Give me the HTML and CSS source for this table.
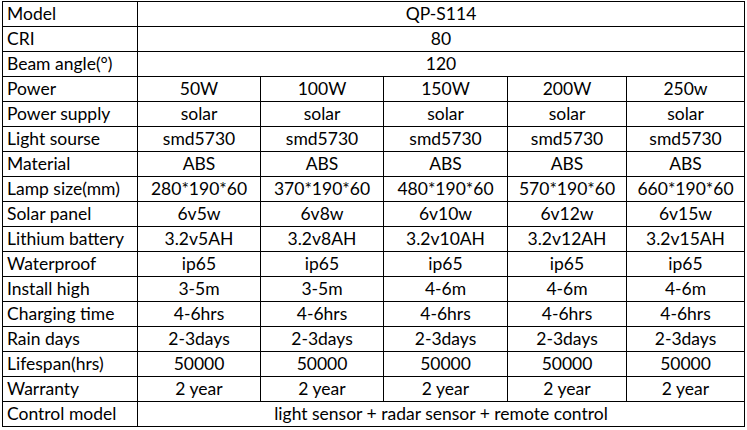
FILE: index.html
```html
<!DOCTYPE html>
<html lang="en">
<head>
  <meta charset="UTF-8" />
  <title>QP-S114 spec</title>
  <link rel="stylesheet" href="styles.css">
</head>
<body>
  <table class="spec">
    <colgroup>
      <col class="c-label">
      <col class="c1"><col class="c2"><col class="c3"><col class="c4"><col class="c5">
    </colgroup>
    <tr><td>Model</td><td colspan="5">QP-S114</td></tr>
    <tr><td>CRI</td><td colspan="5">80</td></tr>
    <tr><td>Beam angle(°)</td><td colspan="5">120</td></tr>
    <tr><td>Power</td><td>50W</td><td>100W</td><td>150W</td><td>200W</td><td>250w</td></tr>
    <tr><td>Power supply</td><td>solar</td><td>solar</td><td>solar</td><td>solar</td><td>solar</td></tr>
    <tr><td>Light sourse</td><td>smd5730</td><td>smd5730</td><td>smd5730</td><td>smd5730</td><td>smd5730</td></tr>
    <tr><td>Material</td><td>ABS</td><td>ABS</td><td>ABS</td><td>ABS</td><td>ABS</td></tr>
    <tr><td>Lamp size(mm)</td><td>280*190*60</td><td>370*190*60</td><td>480*190*60</td><td>570*190*60</td><td>660*190*60</td></tr>
    <tr><td>Solar panel</td><td>6v5w</td><td>6v8w</td><td>6v10w</td><td>6v12w</td><td>6v15w</td></tr>
    <tr><td>Lithium battery</td><td>3.2v5AH</td><td>3.2v8AH</td><td>3.2v10AH</td><td>3.2v12AH</td><td>3.2v15AH</td></tr>
    <tr><td>Waterproof</td><td>ip65</td><td>ip65</td><td>ip65</td><td>ip65</td><td>ip65</td></tr>
    <tr><td>Install high</td><td>3-5m</td><td>3-5m</td><td>4-6m</td><td>4-6m</td><td>4-6m</td></tr>
    <tr><td>Charging time</td><td>4-6hrs</td><td>4-6hrs</td><td>4-6hrs</td><td>4-6hrs</td><td>4-6hrs</td></tr>
    <tr><td>Rain days</td><td>2-3days</td><td>2-3days</td><td>2-3days</td><td>2-3days</td><td>2-3days</td></tr>
    <tr><td>Lifespan(hrs)</td><td>50000</td><td>50000</td><td>50000</td><td>50000</td><td>50000</td></tr>
    <tr><td>Warranty</td><td>2 year</td><td>2 year</td><td>2 year</td><td>2 year</td><td>2 year</td></tr>
    <tr><td>Control model</td><td colspan="5">light sensor + radar sensor + remote control</td></tr>
  </table>
</body>
</html>
```

FILE: styles.css
```css
body {
  margin: 0;
  background: #fff;
  color: #000;
  font-family: Lato, "Liberation Sans", sans-serif;
  font-size: 17.5px;
}

.spec {
  border-collapse: collapse;
  table-layout: fixed;
  width: 742px;
  margin: 1px 0 0 2px;
}

.c-label { width: 135px; }
.c1 { width: 123px; }
.c2 { width: 123px; }
.c3 { width: 124px; }
.c4 { width: 119px; }
.c5 { width: 118px; }

.spec td {
  border: 1px solid #000;
  height: 24px;
  padding: 0;
  text-align: center;
  line-height: 24px;
  white-space: nowrap;
  overflow: hidden;
}

.spec td:first-child {
  text-align: left;
  padding-left: 4px;
}
```
